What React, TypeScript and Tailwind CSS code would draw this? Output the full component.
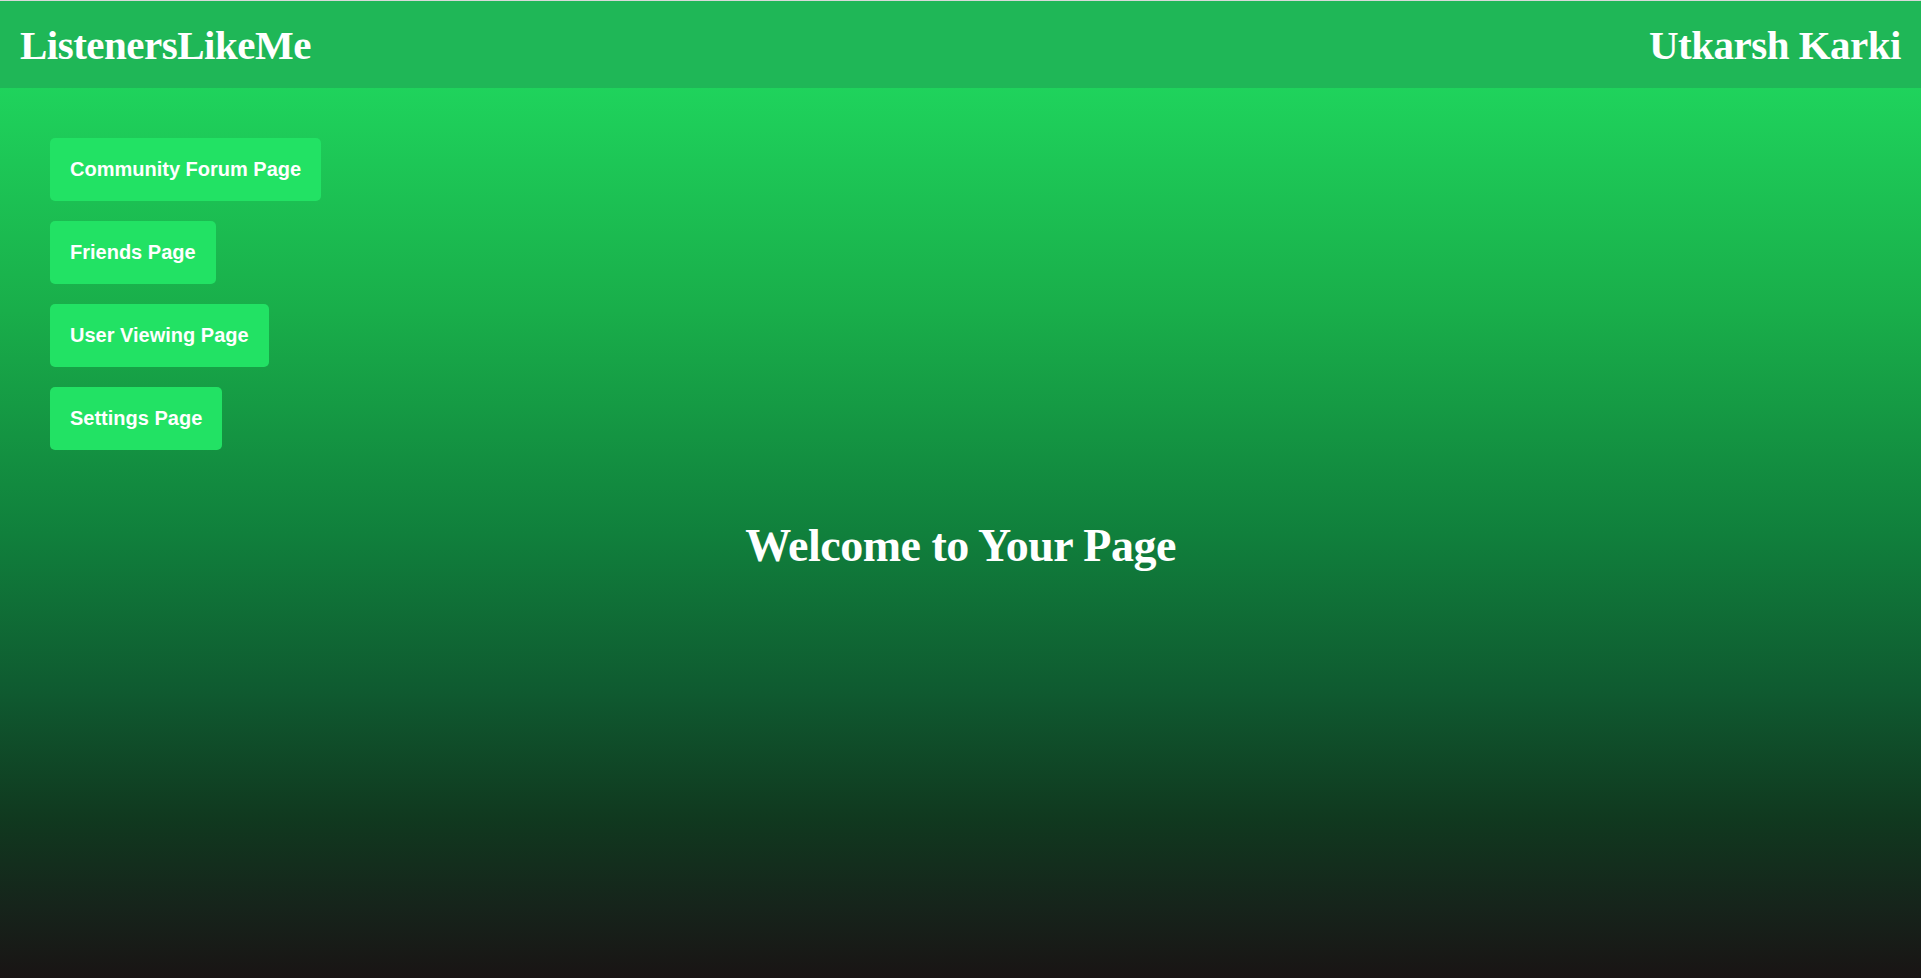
import React from "react";

const buttons = [
  "Community Forum Page",
  "Friends Page",
  "User Viewing Page",
  "Settings Page",
];

export default function App() {
  return (
    <div className="h-[978px] w-full flex flex-col overflow-hidden border-t border-[#d9d9d9] font-['Liberation_Serif','Times_New_Roman',serif]">
      <header className="h-[87px] shrink-0 bg-[#1fb757] flex items-center justify-between px-5 text-white">
        <h1 className="text-[41px] font-bold leading-[48px] tracking-[-0.5px]">ListenersLikeMe</h1>
        <div className="text-[41px] font-bold leading-[48px] tracking-[-0.5px]">Utkarsh Karki</div>
      </header>
      <main className="flex-1 bg-[linear-gradient(to_bottom,#1fd35c_0%,#19ae4a_25%,#10803c_50%,#0f5a30_68%,#10391f_82%,#16241b_92%,#191414_100%)]">
        <nav className="flex flex-col items-start gap-5 pt-[50px] pl-[50px]">
          {buttons.map((b) => (
            <button
              key={b}
              className="bg-[#22e264] text-white font-bold text-[20px] leading-[23px] px-5 py-5 rounded-[5px] font-['Liberation_Sans',Arial,sans-serif]"
            >
              {b}
            </button>
          ))}
        </nav>
        <h2 className="mt-[70px] text-center text-white font-bold text-[46px] leading-[51px] tracking-[-0.5px]">
          Welcome to Your Page
        </h2>
      </main>
    </div>
  );
}
